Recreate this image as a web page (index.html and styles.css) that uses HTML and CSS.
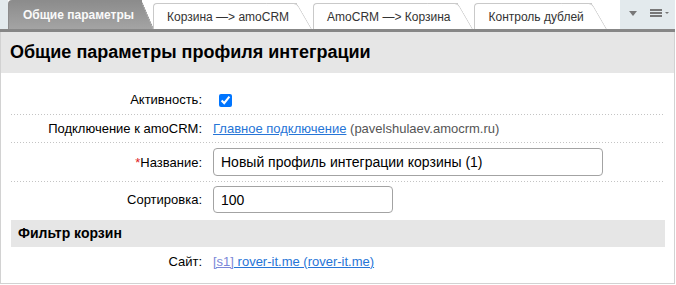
FILE: index.html
```html
<!DOCTYPE html>
<html>
<head>
    <meta charset="utf-8">
    <link rel="stylesheet" href="styles.css">
</head>
<body>
    <div class="page">
        <div class="tabs">
            <div class="tab-list">
                <div class="tab tab-active">Общие параметры</div>
                <div class="tab">Корзина —&gt; amoCRM</div>
                <div class="tab">AmoCRM —&gt; Корзина</div>
                <div class="tab">Контроль дублей</div>
            </div>
            <div class="tools">
                <span class="tool-arrow"></span>
                <svg class="tool-menu" width="20" height="8" viewBox="0 0 20 8">
                    <rect x="0" y="0" width="12" height="2" fill="#777"/>
                    <rect x="0" y="3" width="12" height="2" fill="#777"/>
                    <rect x="0" y="6" width="12" height="2" fill="#777"/>
                    <polygon points="15,3 19,3 17,5" fill="#777"/>
                </svg>
            </div>
        </div>
        <div class="bar"></div>

        <div class="panel">
            <h2 class="panel-title">Общие параметры профиля интеграции</h2>

            <div class="form">
                <div class="row row-line row-check">
                    <div class="label">Активность:</div>
                    <div class="value"><input type="checkbox" class="check" checked></div>
                </div>
                <div class="row row-line row-text">
                    <div class="label">Подключение к amoCRM:</div>
                    <div class="value"><a href="#" class="link">Главное подключение</a> <span class="muted">(pavelshulaev.amocrm.ru)</span></div>
                </div>
                <div class="row row-line row-input">
                    <div class="label"><span class="required">*</span>Название:</div>
                    <div class="value"><input type="text" class="field field-wide" value="Новый профиль интеграции корзины (1)"></div>
                </div>
                <div class="row row-sort">
                    <div class="label">Сортировка:</div>
                    <div class="value"><input type="text" class="field field-short" value="100"></div>
                </div>

                <div class="section-title">Фильтр корзин</div>

                <div class="row row-site">
                    <div class="label">Сайт:</div>
                    <div class="value"><a href="#" class="link link-code">[s1]</a><a href="#" class="link"> rover-it.me (rover-it.me)</a></div>
                </div>
            </div>
        </div>
    </div>
</body>
</html>
```

FILE: styles.css
```css
body {
    margin: 0;
    font-family: "Liberation Sans", Arial, sans-serif;
    font-size: 13px;
    color: #000;
    background-color: #fff;
}

.page {
    width: 675px;
}

/* tabs */

.tabs {
    display: flex;
    height: 29px;
    padding-left: 8px;
    background-color: #e3eaed;
}

.tab-list {
    display: flex;
    align-items: flex-end;
    flex: 1;
    min-width: 0;
    background-color: #fff;
}

.tab {
    position: relative;
    z-index: 0;
    display: flex;
    align-items: center;
    height: 25px;
    padding: 0 8px 0 13px;
    margin-right: 16px;
    background: #fff;
    border: 1px solid #c9c9c9;
    border-right: none;
    border-bottom: none;
    border-radius: 4px 0 0 0;
    font-size: 12px;
    color: #333;
    white-space: nowrap;
}

.tab::after {
    content: "";
    position: absolute;
    z-index: -1;
    top: -1px;
    bottom: 0;
    right: -15px;
    width: 30px;
    background: inherit;
    border-top: 1px solid #c9c9c9;
    border-right: 1px solid #c9c9c9;
    border-radius: 0 4px 0 0;
    transform: skewX(30deg);
    transform-origin: bottom right;
}

.tab-active {
    height: 28px;
    padding: 0 8px 0 14px;
    margin-right: 11px;
    background: linear-gradient(#8c8c8c, #a4a4a4);
    border-color: #8c8c8c;
    color: #fafafa;
    font-weight: bold;
}

.tab-active::after {
    right: -12px;
    border-color: #8c8c8c;
    transform: skewX(23deg);
}

.tools {
    display: flex;
    align-items: center;
    gap: 13px;
    width: 46px;
    padding-left: 9px;
    padding-bottom: 3px;
}

.tool-arrow {
    width: 0;
    height: 0;
    border-left: 4px solid transparent;
    border-right: 4px solid transparent;
    border-top: 5px solid #777;
}

.bar {
    height: 3px;
    background-color: #878787;
}

/* panel */

.panel {
    border: 1px solid #d2d2d2;
    border-top: none;
    padding-bottom: 8px;
}

.panel-title {
    height: 41px;
    line-height: 41px;
    margin: 0;
    padding-left: 9px;
    background-color: #e6e6e6;
    font-size: 18px;
    font-weight: bold;
    color: #000;
}

.form {
    padding: 12px 9px 0 10px;
}

.row {
    display: flex;
    align-items: center;
}

.row-line {
    background-image: linear-gradient(to right, #c4c4c4 1px, transparent 1px);
    background-size: 3px 1px;
    background-repeat: repeat-x;
    background-position: left bottom;
    padding-bottom: 1px;
}

.row-check {
    height: 29px;
}

.row-text {
    height: 27px;
}

.row-input {
    height: 38px;
}

.row-sort {
    height: 35px;
}

.row-site {
    height: 28px;
}

.label {
    width: 191px;
    padding-right: 11px;
    text-align: right;
    color: #000;
}

.required {
    color: #e02020;
}

.value {
    flex: 1;
    color: #000;
}

.check {
    width: 13px;
    height: 13px;
    margin: 0 0 0 6px;
    vertical-align: middle;
}

.link {
    color: #2675d7;
    text-decoration: underline;
}

.link-code {
    color: #7b87d8;
}

.muted {
    color: #555;
}

.field {
    box-sizing: border-box;
    height: 28px;
    padding: 0 7px;
    border: 1px solid #a3a3a3;
    border-radius: 4px;
    font-family: "Liberation Sans", Arial, sans-serif;
    font-size: 14px;
    color: #000;
}

.field-wide {
    width: 390px;
}

.field-short {
    width: 180px;
    height: 27px;
}

.section-title {
    height: 27px;
    line-height: 27px;
    margin-top: 3px;
    padding-left: 7px;
    background-color: #e6e6e6;
    font-size: 14px;
    font-weight: bold;
}
```
